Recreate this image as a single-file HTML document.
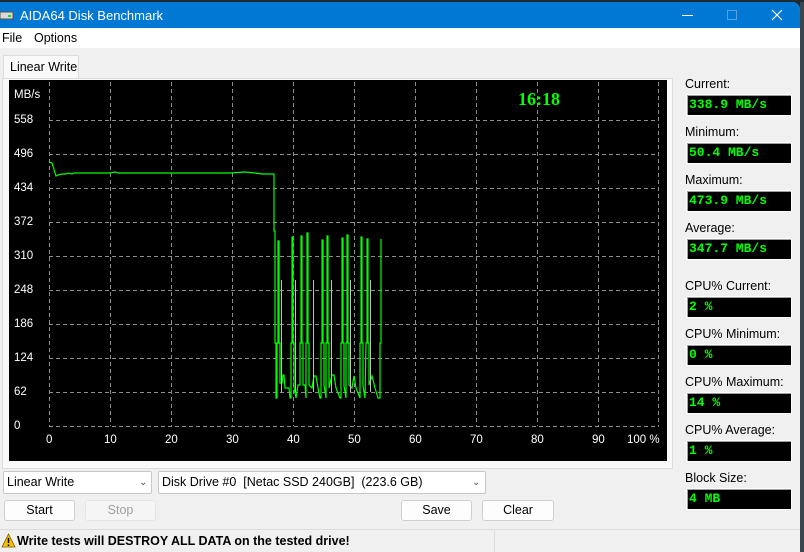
<!DOCTYPE html>
<html><head><meta charset="utf-8"><style>
*{margin:0;padding:0;box-sizing:border-box}
body{width:804px;height:552px;overflow:hidden;background:#1f2a33;font-family:"Liberation Sans",sans-serif;font-size:12px;color:#000;position:relative}
.win{position:absolute;left:0;top:2px;width:800px;height:550px;background:#f0f0f0;border-radius:0 8px 0 0;overflow:hidden}
.title{position:absolute;left:0;top:0;width:800px;height:26px;background:#0078d4;color:#fff;font-size:13px}
.menu{position:absolute;left:0;top:26px;width:800px;height:20px;background:#fff;font-size:12.5px}
.a{position:absolute;white-space:nowrap}
.lbl{position:absolute;left:685px;font-size:12.5px}
.val{position:absolute;left:686px;width:106px;height:22px;background:#000;border:1px solid #fff;box-shadow:inset 1px 1px 0 #a0a0a0;color:#00ff00;font-family:"Liberation Mono",monospace;font-weight:bold;font-size:13px;line-height:20px;padding-left:2px}
.btn{position:absolute;top:500px;height:21px;background:#fdfdfd;border:1px solid #d0d0d0;border-radius:3px;text-align:center;line-height:19px;font-size:12.5px}
.cb{position:absolute;top:471px;height:23px;background:#fff;border:1px solid #c8c8c8;border-radius:2px;font-size:12.5px;line-height:21px;padding-left:3px}
.yl{position:absolute;left:14px;color:#fff;font-size:11.5px}
.xl{position:absolute;top:434px;color:#fff;font-size:11.5px}
</style></head><body>
<div class="win">
 <div class="title">
  <svg class="a" style="left:0;top:8px" width="14" height="10"><rect x="0" y="2" width="13" height="7" fill="#d8d8d8" stroke="#555" stroke-width="1"/><rect x="8" y="5" width="3" height="2" fill="#3c3"/></svg>
  <div class="a" style="left:20px;top:6px">AIDA64 Disk Benchmark</div>
  <div class="a" style="left:682px;top:13px;width:11px;height:1px;background:#fff"></div>
  <div class="a" style="left:727px;top:8px;width:10px;height:10px;border:1px solid #5aa0e0"></div>
  <svg class="a" style="left:771px;top:7px" width="12" height="12"><path d="M1 1L11 11M11 1L1 11" stroke="#fff" stroke-width="1.2"/></svg>
 </div>
 <div class="menu"><div class="a" style="left:2px;top:3px">File</div><div class="a" style="left:34px;top:3px">Options</div></div>
 <div class="a" style="left:3px;top:53px;width:76px;height:24px;background:#f9f9f9;border:1px solid #dcdcdc;border-bottom:none"></div>
 <div class="a" style="left:10px;top:58px;font-size:12.5px">Linear Write</div>
 <div class="a" style="left:2px;top:76px;width:671px;height:391px;border:1px solid #dcdcdc;background:#f9f9f9"></div>
 <div class="a" style="left:9px;top:78px;width:658px;height:381px;background:#000"></div>
</div>
<svg class="a" style="left:0;top:0" width="804" height="552">
 <g stroke="#8c8c8c" stroke-width="1" stroke-dasharray="4,3" fill="none">
  <path d="M49.5 82V426M110.5 82V426M171.5 82V426M232.5 82V426M293.5 82V426M354.5 82V426M415.5 82V426M476.5 82V426M537.5 82V426M598.5 82V426M658.5 82V426"/>
  <path d="M49 120.5H659M49 154.5H659M49 188.5H659M49 222.5H659M49 256.5H659M49 290.5H659M49 324.5H659M49 358.5H659M49 392.5H659M49 426.5H659"/>
 </g>
 <polyline fill="none" stroke="#00ff00" stroke-width="1.2" points="49,162 52,163 56,176 58,175 62,174 66,174 68,173 72,174 74,173 90,173 110,173 115,172 118,173 140,173 160,173 180,173 205,173 220,173 230,173 245,172 255,173 262,174 267,174 274,174 274,231 275,231 275,343 276,343 276,398 277,398 277,343 278,343 278,241 279,241 279,343 280,343 280,383 282,383 283,375 284,375 285,388 289,388 290,398 291,398 291,343 292,343 292,237 293,237 293,343 294,343 294,387 296,398 298,385 300,385 300,343 301,343 301,236 302,236 302,343 303,343 303,385 305,385 306,398 306,343 307,343 307,233 308,233 308,343 309,343 309,385 312,388 314,376 316,376 318,388 320,398 321,398 321,343 322,343 322,240 323,240 323,343 324,343 324,385 326,398 326,343 327,343 327,236 328,236 328,343 329,343 329,388 332,375 334,375 336,388 340,398 341,398 341,343 342,343 342,238 343,238 343,343 344,343 344,386 346,398 346,343 347,343 347,235 348,235 348,343 349,343 349,385 352,388 354,376 356,388 360,398 360,343 361,343 361,237 362,237 362,343 363,343 363,386 365,398 366,343 367,343 367,239 368,239 368,343 369,343 369,385 372,376 375,388 378,398 380,398 380,343 381,343 381,239"/>
 <g stroke="#bfbfbf" stroke-width="1" fill="none"><path d="M281.5 280V392M295.5 280V392M313.5 280V392M331.5 280V392M350.5 280V392M370.5 280V392"/></g>
</svg>
<div class="a" style="left:0;top:0;width:804px;height:2px;background:#1f2a33"></div>
<div class="yl" style="top:89px">MB/s</div>
<div class="yl" style="top:114px">558</div><div class="yl" style="top:148px">496</div><div class="yl" style="top:182px">434</div><div class="yl" style="top:216px">372</div><div class="yl" style="top:250px">310</div><div class="yl" style="top:284px">248</div><div class="yl" style="top:318px">186</div><div class="yl" style="top:352px">124</div><div class="yl" style="top:386px">62</div><div class="yl" style="top:420px">0</div>
<div class="xl" style="left:46px">0</div><div class="xl" style="left:104px">10</div><div class="xl" style="left:165px">20</div><div class="xl" style="left:226px">30</div><div class="xl" style="left:287px">40</div><div class="xl" style="left:348px">50</div><div class="xl" style="left:409px">60</div><div class="xl" style="left:470px">70</div><div class="xl" style="left:531px">80</div><div class="xl" style="left:592px">90</div><div class="xl" style="left:627px">100 %</div>
<div class="a" style="left:518px;top:89px;color:#00ff00;font-family:'Liberation Serif',serif;font-weight:bold;font-size:18px">16:18</div>

<div class="lbl" style="top:77px">Current:</div><div class="val" style="top:94px">338.9 MB/s</div>
<div class="lbl" style="top:125px">Minimum:</div><div class="val" style="top:142px">50.4 MB/s</div>
<div class="lbl" style="top:173px">Maximum:</div><div class="val" style="top:190px">473.9 MB/s</div>
<div class="lbl" style="top:221px">Average:</div><div class="val" style="top:238px">347.7 MB/s</div>
<div class="lbl" style="top:279px">CPU% Current:</div><div class="val" style="top:296px">2 %</div>
<div class="lbl" style="top:327px">CPU% Minimum:</div><div class="val" style="top:344px">0 %</div>
<div class="lbl" style="top:375px">CPU% Maximum:</div><div class="val" style="top:392px">14 %</div>
<div class="lbl" style="top:423px">CPU% Average:</div><div class="val" style="top:440px">1 %</div>
<div class="lbl" style="top:471px">Block Size:</div><div class="val" style="top:488px">4 MB</div>

<div class="cb" style="left:3px;width:149px">Linear Write<span class="a" style="left:135px;top:0;font-size:10px;color:#555">&#8964;</span></div>
<div class="cb" style="left:158px;width:328px">Disk Drive #0&nbsp; [Netac SSD 240GB]&nbsp; (223.6 GB)<span class="a" style="left:313px;top:0;font-size:10px;color:#555">&#8964;</span></div>
<div class="btn" style="left:4px;width:71px">Start</div>
<div class="btn" style="left:85px;width:71px;color:#a0a0a0;background:#f5f5f5;border-color:#e5e5e5">Stop</div>
<div class="btn" style="left:401px;width:71px">Save</div>
<div class="btn" style="left:482px;width:72px">Clear</div>
<div class="a" style="left:0;top:529px;width:800px;height:1px;background:#dcdcdc"></div>
<div class="a" style="left:494px;top:531px;width:1px;height:21px;background:#dcdcdc"></div>
<svg class="a" style="left:1px;top:533px" width="15" height="15"><path d="M7.5 1L14 14H1Z" fill="#f5c000" stroke="#7a5a00" stroke-width="0.8"/><path d="M7.5 5V10M7.5 11.5V13" stroke="#000" stroke-width="1.5"/></svg>
<div class="a" style="left:17px;top:534px;font-weight:bold;font-size:12.5px">Write tests will DESTROY ALL DATA on the tested drive!</div>
<div class="a" style="left:800px;top:2px;width:4px;height:550px;background:#3a4550"></div>
</body></html>
